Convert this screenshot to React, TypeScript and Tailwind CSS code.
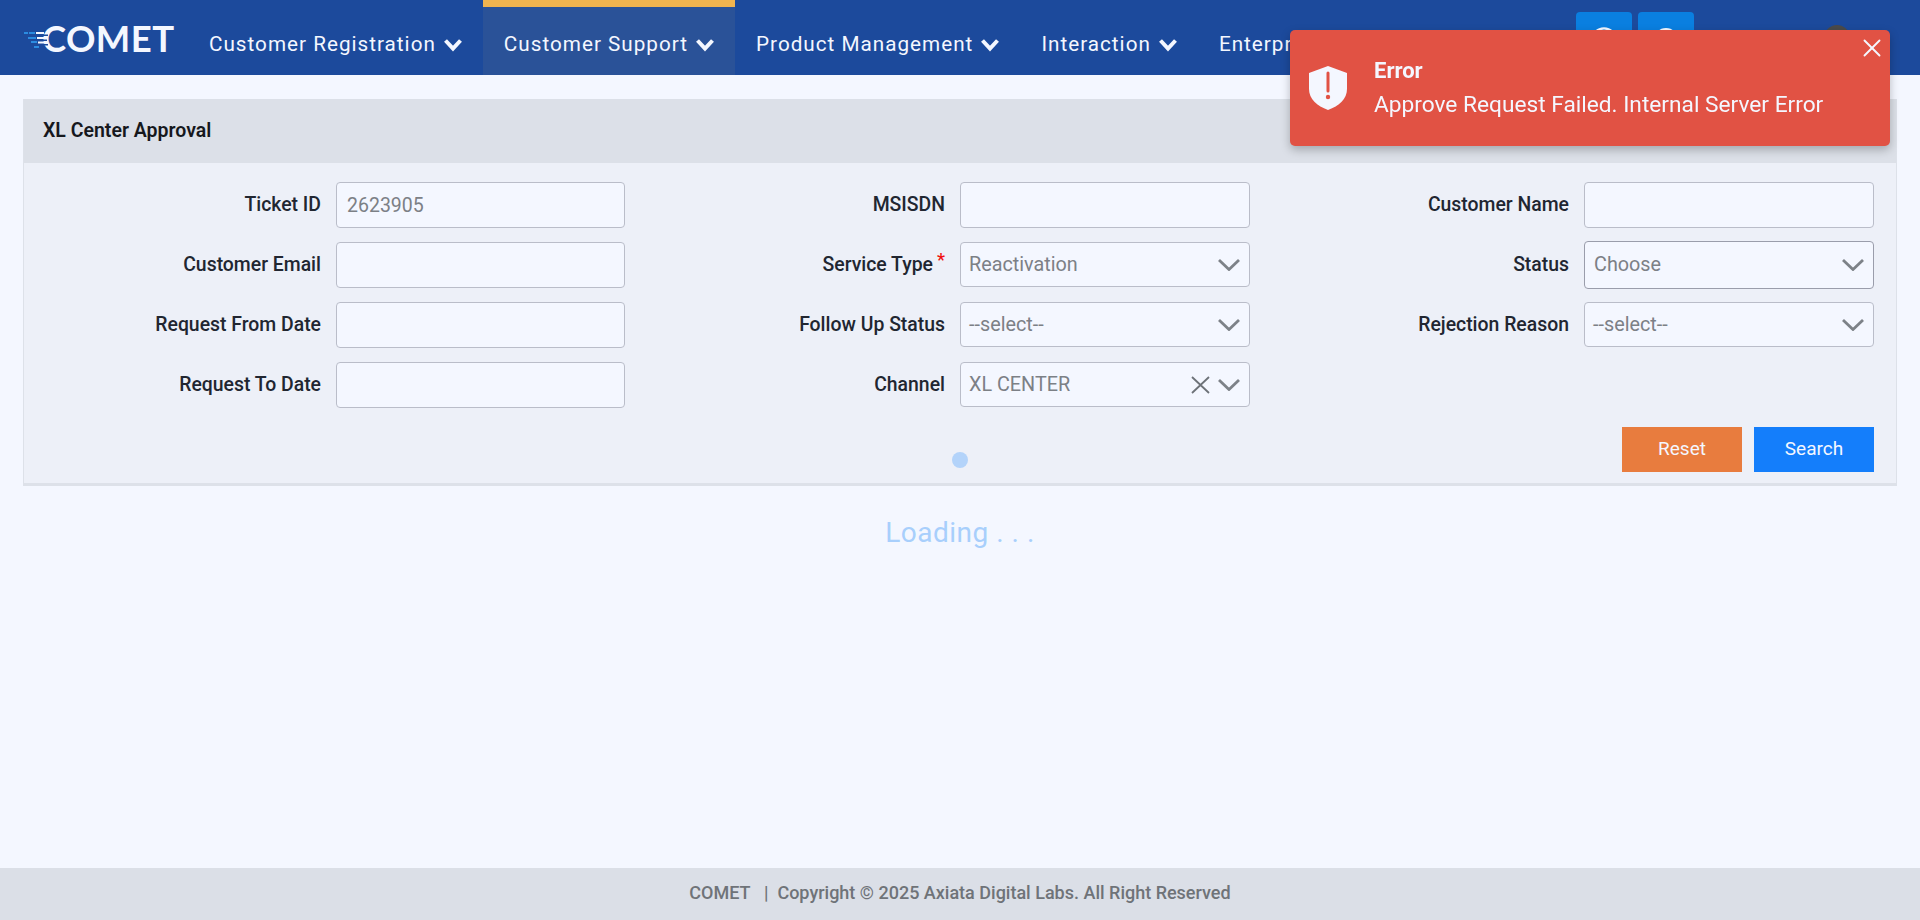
import { Circle, X } from "lucide-react";

const navItems = [
  "Customer Registration",
  "Customer Support",
  "Product Management",
  "Interaction",
  "Enterprise",
];

const Chevron = () => (
  <svg width="22" height="12" viewBox="0 0 22 12" fill="none" className="shrink-0">
    <path d="M1 1l10 9.5L21 1" stroke="#7d8288" strokeWidth="2.8" />
  </svg>
);

const NavChevron = () => (
  <svg width="20" height="14" viewBox="0 0 20 14" fill="none" className="shrink-0">
    <path d="M2.5 2.5L10 10.5l7.5-8" stroke="#f4f7ff" strokeWidth="4" />
  </svg>
);

const ClearIcon = () => (
  <svg width="19" height="18" viewBox="0 0 19 18" fill="none" className="mr-[8px] shrink-0">
    <path d="M1 1l17 16M18 1L1 17" stroke="#6d7278" strokeWidth="1.8" />
  </svg>
);

const Logo = () => (
  <div className="relative ml-[24px] flex h-full w-[150px] shrink-0 items-center">
    <span className="ml-[18px] mt-[1px] text-[36.5px] font-bold leading-none tracking-[0.4px] text-[#f4f7ff] font-['Lato',sans-serif]">
      COMET
    </span>
    {/* speed lines across the C */}
    <svg width="28" height="22" viewBox="0 0 28 22" className="absolute left-0 top-[29px]">
      <rect x="0" y="3" width="4" height="2" fill="#2b8be0" />
      <rect x="5" y="3" width="6" height="2" fill="#2b8be0" />
      <rect x="4" y="8" width="8" height="2" fill="#2b8be0" />
      <rect x="7" y="12" width="6" height="2" fill="#2b8be0" />
      <rect x="10" y="17" width="5" height="2" fill="#2b8be0" />
      <rect x="12" y="5.5" width="12" height="1.5" fill="#1c4a9c" />
      <rect x="13" y="10.5" width="10" height="1.5" fill="#1c4a9c" />
      <rect x="14" y="15" width="10" height="1.5" fill="#1c4a9c" />
      <rect x="12" y="3" width="8" height="2" fill="#f4f7ff" />
      <rect x="13" y="8" width="8" height="2" fill="#f4f7ff" />
      <rect x="14" y="12.5" width="8" height="2" fill="#f4f7ff" />
    </svg>
  </div>
);

const Navbar = () => (
  <nav className="flex h-[75px] shrink-0 bg-[#1c4a9c]">
    <Logo />
    <ul className="ml-[14px] flex h-full">
      {navItems.map((item) => (
        <li
          key={item}
          className={
            item === "Customer Support"
              ? "flex items-center gap-[7px] border-t-[7px] border-[#f0b44f] bg-[#2a5298] pl-[21px] pr-[20px] pt-[8px]"
              : "flex items-center gap-[7px] pl-[21px] pr-[20px] pt-[15px]"
          }
        >
          <span className="text-[20.7px] font-normal tracking-[1px] text-[#f4f7ff]">{item}</span>
          <NavChevron />
        </li>
      ))}
    </ul>
    <div className="ml-auto flex items-start gap-[6px] pr-[70px] pt-[12px]">
      <button className="flex h-[56px] w-[56px] items-center justify-center rounded-[4px] bg-[#0a7fe0]">
        <Circle size={28} strokeWidth={2} className="text-[#f4f7ff]" />
      </button>
      <button className="flex h-[56px] w-[56px] items-center justify-center rounded-[4px] bg-[#0a7fe0]">
        <Circle size={26} strokeWidth={2} className="text-[#f4f7ff]" />
      </button>
      <div className="ml-[124px] mt-[13px] h-[26px] w-[26px] rounded-full bg-[#4a4a4a]" />
    </div>
  </nav>
);

const Label = ({ text, required }: { text: string; required?: boolean }) => (
  <label className="relative text-right text-[19.4px] font-medium leading-none text-[#212631]">
    {text}
    {required && (
      <span className="absolute -right-[12px] -top-[4px] text-[18px] text-[#f01010]">*</span>
    )}
  </label>
);

const TextField = ({ label, value, narrow }: { label: string; value?: string; narrow?: boolean }) => (
  <div className={narrow ? "flex h-[46px] items-center justify-end gap-[15px] pr-[23px]" : "flex h-[46px] items-center justify-end gap-[15px] pr-[22px]"}>
    <Label text={label} />
    <input
      readOnly
      value={value ?? ""}
      aria-label={label}
      className={
        narrow
          ? "h-[46px] w-[289px] rounded-[4px] border border-[#babdc9] bg-[#f4f7ff] px-[10px] text-[19.5px] text-[#7c8086] outline-none"
          : "h-[46px] w-[290px] rounded-[4px] border border-[#babdc9] bg-[#f4f7ff] px-[10px] text-[19.5px] text-[#7c8086] outline-none"
      }
    />
  </div>
);

const SelectField = ({
  label,
  value,
  required,
  clearable,
  dark,
}: {
  label: string;
  value: string;
  required?: boolean;
  clearable?: boolean;
  dark?: boolean;
}) => (
  <div className="flex h-[46px] items-center justify-end gap-[15px] pr-[22px]">
    <div className={required ? "mr-[12px] flex" : "flex"}>
      <Label text={label} required={required} />
    </div>
    <div
      className={
        dark
          ? "-mt-[1px] flex h-[48px] w-[290px] items-center self-start rounded-[4px] border border-[#9a9dab] bg-[#f4f7ff] pl-[9px] pr-[9px]"
          : "flex h-[45px] w-[290px] items-center self-start rounded-[4px] border border-[#babdc9] bg-[#f4f7ff] pl-[8px] pr-[9px]"
      }
    >
      <span className="flex-1 text-[19.8px] text-[#7c8086]">{value}</span>
      {clearable && <ClearIcon />}
      <Chevron />
    </div>
  </div>
);

const FilterCard = () => (
  <section className="relative mx-[23px] mt-[24px] border-x border-b-[3px] border-[#dde1e9] bg-[#edf0f8]">
    <header className="flex h-[64px] items-center bg-[#dce0e8] pl-[19px]">
      <h1 className="text-[19.5px] font-semibold text-[#16181d]">XL Center Approval</h1>
    </header>
    <div className="pb-[11px] pt-[19px]">
      <div className="grid grid-cols-3 gap-y-[14px]">
        <TextField label="Ticket ID" value="2623905" narrow />
        <TextField label="MSISDN" />
        <TextField label="Customer Name" />
        <TextField label="Customer Email" narrow />
        <SelectField label="Service Type" value="Reactivation" required />
        <SelectField label="Status" value="Choose" dark />
        <TextField label="Request From Date" narrow />
        <SelectField label="Follow Up Status" value="--select--" />
        <SelectField label="Rejection Reason" value="--select--" />
        <TextField label="Request To Date" narrow />
        <SelectField label="Channel" value="XL CENTER" clearable />
      </div>
      <div className="mt-[19px] flex justify-end gap-[12px] pr-[22px]">
        <button className="h-[45px] w-[120px] bg-[#e87c3e] text-[19px] text-[#f4f7ff]">Reset</button>
        <button className="h-[45px] w-[120px] bg-[#147efb] text-[19px] text-[#f4f7ff]">Search</button>
      </div>
    </div>
    {/* loader dot */}
    <div className="absolute bottom-[15px] left-1/2 h-[16px] w-[16px] -translate-x-1/2 rounded-full bg-[#b3d3fa]" />
  </section>
);

const Toast = () => (
  <div className="fixed left-[1290px] top-[30px] flex h-[116px] w-[600px] rounded-[5px] bg-[#e15244] shadow-[0_4px_10px_rgba(0,0,0,0.25)]">
    <svg width="38" height="44" viewBox="0 0 38 44" className="ml-[19px] mt-[36px] shrink-0">
      <path d="M19 0l19 7v16c0 10-8 17-19 21C8 40 0 33 0 23V7z" fill="#f4f7ff" />
      <path d="M19 7v18" stroke="#e15244" strokeWidth="3" strokeLinecap="round" />
      <circle cx="19" cy="31" r="2.2" fill="#e15244" />
    </svg>
    <div className="ml-[27px] pt-[27px] text-[#f4f7ff]">
      <p className="text-[22px] font-bold leading-[28px]">Error</p>
      <p className="mt-[6px] text-[22.7px] leading-[28px]">Approve Request Failed. Internal Server Error</p>
    </div>
    <X size={30} strokeWidth={1.5} className="absolute right-[3px] top-[3px] text-[#f4f7ff]" />
  </div>
);

export default function App() {
  return (
    <div className="flex h-screen flex-col overflow-hidden bg-[#f4f7ff] font-['Roboto',sans-serif]">
      <Navbar />
      <main className="flex-1">
        <FilterCard />
        <p className="mt-[29px] text-center text-[28px] leading-[36px] tracking-[0.5px] text-[#a8cffc]">
          Loading . . .
        </p>
      </main>
      <footer className="flex h-[52px] shrink-0 items-center justify-center bg-[#dbdfe7] pb-[3px] text-[18px] font-medium text-[#6f7378]">
        COMET&nbsp;&nbsp; |&nbsp; Copyright © 2025 Axiata Digital Labs. All Right Reserved
      </footer>
      <Toast />
    </div>
  );
}
